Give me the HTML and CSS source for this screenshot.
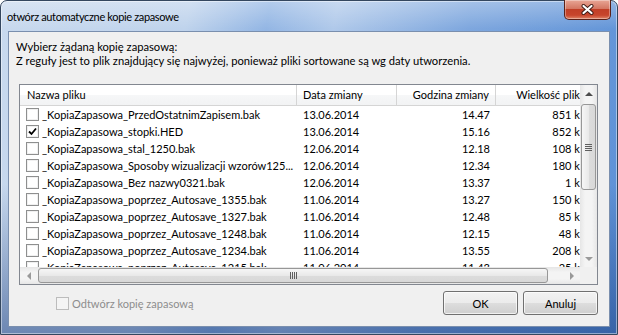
FILE: index.html
```html
<!DOCTYPE html>
<html lang="pl">
<head>
  <meta charset="UTF-8">
  <meta name="viewport" content="width=device-width, initial-scale=1.0">
  <title>otwórz automatyczne kopie zapasowe</title>
  <link rel="stylesheet" href="styles.css">
</head>
<body>
  <div class="window">
    <div class="titlebar">
      <span class="title">otwórz automatyczne kopie zapasowe</span>
      <button class="close" aria-label="Zamknij">
        <svg width="13" height="11" viewBox="0 0 13 11">
          <path d="M2.5 2 L10.5 9 M10.5 2 L2.5 9" stroke="#3b1a14" stroke-width="4" stroke-linecap="round"/>
          <path d="M2.5 2 L10.5 9 M10.5 2 L2.5 9" stroke="#fff" stroke-width="2.2" stroke-linecap="round"/>
        </svg>
      </button>
    </div>

    <div class="client">
      <div class="intro">
        <p>Wybierz żądaną kopię zapasową:</p>
        <p>Z reguły jest to plik znajdujący się najwyżej, ponieważ pliki sortowane są wg daty utworzenia.</p>
      </div>

      <div class="list">
        <div class="viewport">
          <div class="row header">
            <div class="cell name">Nazwa pliku</div>
            <div class="cell date">Data zmiany</div>
            <div class="cell num">Godzina zmiany</div>
            <div class="cell num">Wielkość pliku</div>
          </div>
          <div class="row">
            <div class="cell name"><span class="check"></span>_KopiaZapasowa_PrzedOstatnimZapisem.bak</div>
            <div class="cell date">13.06.2014</div>
            <div class="cell num">14.47</div>
            <div class="cell num">851 kB</div>
          </div>
          <div class="row">
            <div class="cell name"><span class="check checked"><svg width="9" height="9" viewBox="0 0 9 9"><path d="M1 4.5 L3.5 7 L8 1.5" fill="none" stroke="#000" stroke-width="1.8"/></svg></span>_KopiaZapasowa_stopki.HED</div>
            <div class="cell date">13.06.2014</div>
            <div class="cell num">15.16</div>
            <div class="cell num">852 kB</div>
          </div>
          <div class="row">
            <div class="cell name"><span class="check"></span>_KopiaZapasowa_stal_1250.bak</div>
            <div class="cell date">12.06.2014</div>
            <div class="cell num">12.18</div>
            <div class="cell num">108 kB</div>
          </div>
          <div class="row">
            <div class="cell name"><span class="check"></span>_KopiaZapasowa_Sposoby wizualizacji wzorów125...</div>
            <div class="cell date">12.06.2014</div>
            <div class="cell num">12.34</div>
            <div class="cell num">180 kB</div>
          </div>
          <div class="row">
            <div class="cell name"><span class="check"></span>_KopiaZapasowa_Bez nazwy0321.bak</div>
            <div class="cell date">12.06.2014</div>
            <div class="cell num">13.37</div>
            <div class="cell num">1 kB</div>
          </div>
          <div class="row">
            <div class="cell name"><span class="check"></span>_KopiaZapasowa_poprzez_Autosave_1355.bak</div>
            <div class="cell date">11.06.2014</div>
            <div class="cell num">13.27</div>
            <div class="cell num">150 kB</div>
          </div>
          <div class="row">
            <div class="cell name"><span class="check"></span>_KopiaZapasowa_poprzez_Autosave_1327.bak</div>
            <div class="cell date">11.06.2014</div>
            <div class="cell num">12.48</div>
            <div class="cell num">85 kB</div>
          </div>
          <div class="row">
            <div class="cell name"><span class="check"></span>_KopiaZapasowa_poprzez_Autosave_1248.bak</div>
            <div class="cell date">11.06.2014</div>
            <div class="cell num">12.15</div>
            <div class="cell num">48 kB</div>
          </div>
          <div class="row">
            <div class="cell name"><span class="check"></span>_KopiaZapasowa_poprzez_Autosave_1234.bak</div>
            <div class="cell date">11.06.2014</div>
            <div class="cell num">13.55</div>
            <div class="cell num">208 kB</div>
          </div>
          <div class="row">
            <div class="cell name"><span class="check"></span>_KopiaZapasowa_poprzez_Autosave_1215.bak</div>
            <div class="cell date">11.06.2014</div>
            <div class="cell num">11.43</div>
            <div class="cell num">25 kB</div>
          </div>
        </div>

        <div class="vscroll">
          <div class="arrow"><span class="tri up"></span></div>
          <div class="track">
            <div class="thumb"><span class="grip"></span></div>
          </div>
          <div class="arrow"><span class="tri down"></span></div>
        </div>

        <div class="hscroll">
          <div class="arrow"><span class="tri left"></span></div>
          <div class="track">
            <div class="thumb"><span class="grip"></span></div>
          </div>
          <div class="arrow"><span class="tri right"></span></div>
        </div>

        <div class="corner"></div>
      </div>

      <div class="footer">
        <label class="restore">
          <span class="check disabled"></span>Odtwórz kopię zapasową
        </label>
        <div class="buttons">
          <button class="btn">OK</button>
          <button class="btn">Anuluj</button>
        </div>
      </div>
    </div>
  </div>
</body>
</html>
```

FILE: styles.css
```css
* {
  box-sizing: border-box;
}

body {
  margin: 0;
  font-family: "Lato", "Liberation Sans", sans-serif;
  font-size: 11px;
  color: #000;
}

p {
  margin: 0;
}

/* ramka okna */
.window {
  width: 618px;
  height: 335px;
  display: flex;
  flex-direction: column;
  border: 1px solid #34475f;
  border-radius: 7px 7px 0 0;
  background:
    linear-gradient(to bottom, rgba(255, 255, 255, 0.3), rgba(255, 255, 255, 0) 28px, rgba(0, 0, 0, 0) 55%, rgba(20, 55, 120, 0.5)),
    linear-gradient(100deg, #c8d9ee 0%, #bfd3ec 28%, #93b6e4 40%, #b0c9ea 50%, #7ea7de 70%, #5a8fd6 100%);
  box-shadow: inset 0 0 0 1px rgba(255, 255, 255, 0.45);
}

.titlebar {
  height: 30px;
  display: flex;
  align-items: flex-start;
  flex-shrink: 0;
}

.title {
  padding: 9px 0 0 6px;
  line-height: 14px;
  letter-spacing: -0.35px;
  color: #000;
}

.close {
  margin: -1px 6px 0 auto;
  width: 47px;
  height: 20px;
  padding: 0;
  display: flex;
  align-items: center;
  justify-content: center;
  border: 1px solid #5a2119;
  border-top: none;
  border-radius: 0 0 5px 5px;
  background: linear-gradient(to bottom, #e8a696 0%, #d47763 45%, #c13f27 50%, #c7452c 80%, #df8568 100%);
  box-shadow: inset 0 0 0 1px rgba(255, 255, 255, 0.35);
}

/* obszar klienta */
.client {
  margin: 0 7px 7px;
  height: 296px;
  flex-shrink: 0;
  padding: 8px 11px 0 7px;
  border: 1px solid #7a8fae;
  background: #f0f0f0;
}

.intro {
  font-size: 11.2px;
  line-height: 14px;
}

.list {
  width: calc(100% - 3px);
  height: 201px;
  margin: 16px 0 0 3px;
  display: grid;
  grid-template-columns: 1fr 17px;
  grid-template-rows: 1fr 17px;
  border: 1px solid #828790;
  background: #fff;
}

.viewport {
  overflow: hidden;
  white-space: nowrap;
}

.row {
  display: grid;
  grid-template-columns: 277px 100px 99px 97px;
  height: 17px;
  line-height: 17px;
}

.cell {
  overflow: hidden;
  padding: 0 6px;
}

.cell.name {
  display: flex;
  align-items: center;
}

.cell.num {
  text-align: right;
}

.header {
  height: 21px;
  line-height: 20px;
  border-bottom: 1px solid #d5d5d5;
  background: linear-gradient(to bottom, #fff 0%, #fff 50%, #f6f7f8 51%, #f2f3f4 100%);
}

.header .cell {
  border-right: 1px solid #d5d5d5;
}

.header .cell.name {
  padding-left: 7px;
}

/* pola wyboru */
.check {
  width: 13px;
  height: 13px;
  margin-right: 3px;
  flex-shrink: 0;
  display: inline-flex;
  align-items: center;
  justify-content: center;
  border: 1px solid #8e8f8f;
  background: #fff;
  box-shadow: inset 0 0 0 1px #f0f0f0;
}

.check.disabled {
  border-color: #bcbcbc;
  background: #f4f4f4;
  box-shadow: none;
}

/* paski przewijania */
.vscroll,
.hscroll {
  display: flex;
  background: linear-gradient(to right, #e6e6e6, #f4f4f4 30%, #f4f4f4 70%, #e6e6e6);
}

.vscroll {
  flex-direction: column;
}

.hscroll {
  background: linear-gradient(to bottom, #e6e6e6, #f4f4f4 30%, #f4f4f4 70%, #e6e6e6);
}

.arrow {
  width: 17px;
  height: 17px;
  flex-shrink: 0;
  display: flex;
  align-items: center;
  justify-content: center;
}

.track {
  flex: 1;
  display: flex;
}

.vscroll .track {
  flex-direction: column;
  padding-top: 2px;
}

.hscroll .track {
  padding-left: 1px;
}

.thumb {
  display: flex;
  align-items: center;
  justify-content: center;
  border: 1px solid #979797;
  border-radius: 3px;
}

.vscroll .thumb {
  width: 15px;
  height: 86px;
  margin-left: 1px;
  background: linear-gradient(to right, #f6f6f6, #e9e9e9 50%, #dcdcdc 51%, #d8d8d8);
}

.hscroll .thumb {
  width: 510px;
  height: 15px;
  margin-top: 1px;
  background: linear-gradient(to bottom, #f6f6f6, #e9e9e9 50%, #dcdcdc 51%, #d8d8d8);
}

.vscroll .grip {
  width: 7px;
  height: 7px;
  background: repeating-linear-gradient(to bottom, #5f5f5f 0 1px, transparent 1px 2px);
}

.hscroll .grip {
  width: 7px;
  height: 7px;
  background: repeating-linear-gradient(to right, #5f5f5f 0 1px, transparent 1px 2px);
}

.tri {
  width: 0;
  height: 0;
  border: 4px solid transparent;
}

.tri.up {
  border-top: none;
  border-bottom-color: #4d4d4d;
}

.tri.down {
  border-bottom: none;
  border-top-color: #9a9a9a;
}

.tri.left {
  border-left: none;
  border-right-color: #9a9a9a;
}

.tri.right {
  border-right: none;
  border-left-color: #9a9a9a;
}

.corner {
  background: #f0f0f0;
}

/* dolna część */
.footer {
  display: flex;
  align-items: center;
  margin-top: 6px;
}

.restore {
  display: flex;
  align-items: center;
  margin-left: 40px;
  color: #8d8d8d;
}

.buttons {
  display: flex;
  gap: 5px;
  margin-left: auto;
}

.btn {
  width: 75px;
  height: 24px;
  padding: 0;
  font: inherit;
  color: #000;
  border: 1px solid #707070;
  border-radius: 3px;
  background: linear-gradient(to bottom, #f2f2f2 0%, #ebebeb 50%, #dddddd 51%, #cfcfcf 100%);
  box-shadow: inset 0 0 0 1px rgba(255, 255, 255, 0.7);
}
```
